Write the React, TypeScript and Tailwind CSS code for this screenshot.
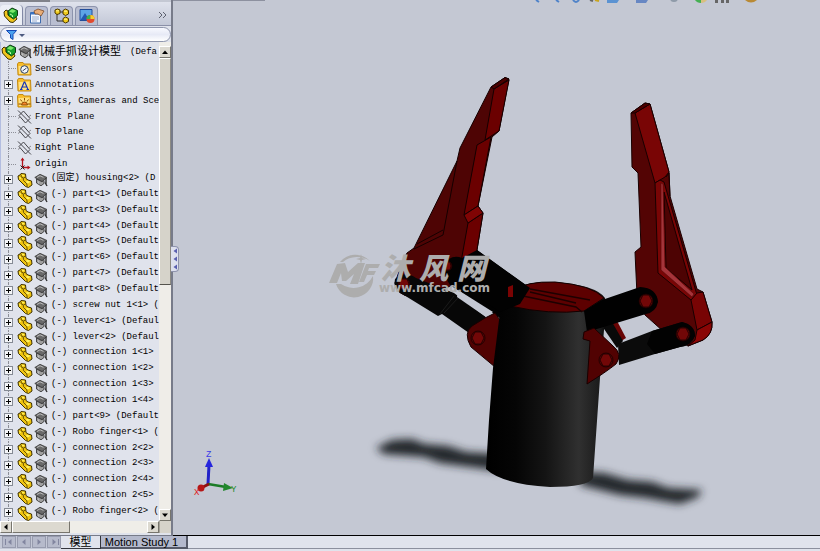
import type { ReactNode } from "react";

const SONG = "font-['Liberation_Mono','Noto_Sans_CJK_SC',monospace]";

type Kind = "folder" | "plane" | "origin" | "part";
type Row = { label: string; kind: Kind; glyph?: "sensor" | "note" | "light"; expandable?: boolean };

const rows: Row[] = [
  { label: "Sensors", kind: "folder", glyph: "sensor" },
  { label: "Annotations", kind: "folder", glyph: "note", expandable: true },
  { label: "Lights, Cameras and Sce", kind: "folder", glyph: "light", expandable: true },
  { label: "Front Plane", kind: "plane" },
  { label: "Top Plane", kind: "plane" },
  { label: "Right Plane", kind: "plane" },
  { label: "Origin", kind: "origin" },
  ...[
    "(固定) housing<2> (D",
    "(-) part<1> (Default",
    "(-) part<3> (Default",
    "(-) part<4> (Default",
    "(-) part<5> (Default",
    "(-) part<6> (Default",
    "(-) part<7> (Default",
    "(-) part<8> (Default",
    "(-) screw nut 1<1> (",
    "(-) lever<1> (Defaul",
    "(-) lever<2> (Defaul",
    "(-) connection 1<1>",
    "(-) connection 1<2>",
    "(-) connection 1<3>",
    "(-) connection 1<4>",
    "(-) part<9> (Default",
    "(-) Robo finger<1> (",
    "(-) connection 2<2>",
    "(-) connection 2<3>",
    "(-) connection 2<4>",
    "(-) connection 2<5>",
    "(-) Robo finger<2> (",
  ].map((label): Row => ({ label, kind: "part", expandable: true })),
];

function PartIcon() {
  return (
    <svg viewBox="0 0 16 16" className="h-4 w-4 shrink-0" aria-hidden="true">
      <path d="M1 4 L3 3 L4 1.500 L8.500 2 L9 6.500 L11 8 L14.500 9 L15 13 L11.500 15.500 L8.500 14.500 L1.500 7.500 Z" fill="#f0c410" stroke="#3c3000" strokeWidth="1" strokeLinejoin="round" />
      <path d="M4.500 3.500 L5.500 2.500 L7.500 3 L6.500 4.500 Z M8.500 10 L10.500 8.800 L13.500 9.800 L11 11.500 Z M2.200 5 L4 5.500 L4 7 L2.200 6.500 Z" fill="#fff25e" />
      <path d="M4.200 3 L4.200 5 L6.200 5.800 L6.500 8.500 L9.800 11.800 L10.200 14.500 M8.500 5 L6.500 6" fill="none" stroke="#5b4800" strokeWidth="0.9" />
    </svg>
  );
}

function AssemblyIcon() {
  return (
    <svg viewBox="0 0 16 16" className="h-4 w-4 shrink-0" aria-hidden="true">
      <path d="M1 5 L3 3 L5 4 L5 8 L9 10 L13 10 L14 12 L10 15.500 L7 15 L1.500 9 Z" fill="#efc51c" stroke="#3c3000" />
      <path d="M5 4 L9 1 L14.500 3.500 L14.500 8.500 L10.500 12 L5.500 8.500 Z" fill="#18a02c" stroke="#0b3d10" />
      <path d="M6 4.500 L9 2 L13 3.700 L10 6 Z" fill="#7be86a" />
      <path d="M7 7 L9.500 8.500 L9.500 10" fill="none" stroke="#c8ffb8" />
    </svg>
  );
}

function CapIcon() {
  return (
    <svg viewBox="0 0 14 14" className="h-3.5 w-3.5 shrink-0" aria-hidden="true">
      <path d="M0.800 4.500 L6 1.300 L13 4.500 L8 8.500 Z" fill="#6a6a6a" stroke="#3a3a3a" strokeWidth="0.8" />
      <path d="M2.500 6 L2.500 10 L7 12.800 L10 10.500 L10 7.300 L8 8.800 Z" fill="#a0a0a0" stroke="#3a3a3a" strokeWidth="0.9" />
      <path d="M3 4.500 L6 2.800 L9.500 4.400 M4.500 8.500 L4.500 10.500" stroke="#c4c4c4" fill="none" strokeWidth="0.9" />
      <path d="M12 5 L12 11 M11 9.500 L13 13" stroke="#303030" strokeWidth="1.400" fill="none" />
    </svg>
  );
}

function FolderIcon({ glyph }: { glyph?: Row["glyph"] }) {
  return (
    <svg viewBox="0 0 15 14" className="h-3.5 w-[15px] shrink-0" aria-hidden="true">
      <path d="M0.500 2 L1.500 0.500 L6 0.500 L7 2 L13.500 2 L14 13 L1 13 Z" fill="#f7bb28" stroke="#c48a12" />
      <path d="M1.500 4 L12.500 3.500 L12.500 12 L2 12 Z" fill="#ffe080" />
      {glyph === "sensor" && (
        <g fill="#f1f5fa" stroke="#33435f">
          <circle cx="7.500" cy="7.500" r="3.800" />
          <path d="M5.500 9 L9.500 6" />
        </g>
      )}
      {glyph === "note" && <path d="M4 11.500 L7.200 4 L7.800 4 L11 11.500 M5.500 9 L9.500 9 M3 11.500 L5.500 11.500 M9.500 11.500 L12 11.500" stroke="#1433b8" strokeWidth="1.200" fill="none" />}
      {glyph === "light" && (
        <g stroke="#8b4a00" fill="none">
          <path d="M4.500 11 A3 3 0 0 1 10.500 11 Z" fill="#f8862a" />
          <path d="M7.500 4 L7.500 6.500 M3.500 5.500 L5 7.500 M11.500 5.500 L10 7.500 M1.500 10 L4 10 M11 10 L13.500 10" />
        </g>
      )}
    </svg>
  );
}

function PlaneIcon() {
  return (
    <svg viewBox="0 0 15 14" className="h-3.5 w-[15px] shrink-0" aria-hidden="true">
      <path d="M2 5.500 L6.500 1 L13 8.500 L8.500 13 Z M1 0.500 L14 13.500" fill="none" stroke="#45454a" />
      <path d="M1 8.500 L3 7 M12 6.500 L14 5" stroke="#8a8a90" />
    </svg>
  );
}

function OriginIcon() {
  return (
    <svg viewBox="0 0 15 14" className="h-3.5 w-[15px] shrink-0" aria-hidden="true">
      <path d="M5.500 10.500 L5.500 2 M5.500 10.500 L12 10.500" stroke="#b3141c" strokeWidth="1.300" />
      <path d="M3.500 3.500 L5.500 0.500 L7.500 3.500 Z M10.500 8.500 L13.500 10.500 L10.500 12.500 Z" fill="#b3141c" />
      <path d="M3.500 8.500 L7.500 12.500 M7.500 8.500 L3.500 12.500" stroke="#222" />
    </svg>
  );
}

function TreeRow({ row }: { row: Row }) {
  const isPart = row.kind === "part";
  return (
    <li className="relative flex min-h-0 flex-1 items-center">
      <span className="absolute inset-y-0 left-[7px] border-l border-dotted border-[#8d8f98]" />
      <span className="flex w-4 shrink-0 items-center pl-[3px]">
        {row.expandable ? (
          <button type="button" aria-label={"Expand " + row.label} className="relative flex h-[9px] w-[9px] items-center justify-center border border-[#858a94] bg-[#f4f5f8]">
            <span className="absolute h-px w-[5px] bg-black" />
            <span className="absolute h-[5px] w-px bg-black" />
          </button>
        ) : (
          <span className="ml-1 w-2 border-t border-dotted border-[#8d8f98]" />
        )}
      </span>
      {row.kind === "folder" && <FolderIcon glyph={row.glyph} />}
      {row.kind === "plane" && <PlaneIcon />}
      {row.kind === "origin" && <OriginIcon />}
      {isPart && <PartIcon />}
      {isPart && <span className="pl-px"><CapIcon /></span>}
      <span className={isPart ? "pb-1 pl-[3px]" : "pl-[3px]"}>{row.label}</span>
    </li>
  );
}

function Tri({ dir, muted }: { dir: "up" | "down" | "left" | "right"; muted?: boolean }) {
  const d = {
    up: "M1 6 L4 2.500 L7 6 Z",
    down: "M1 2.500 L7 2.500 L4 6 Z",
    left: "M5.500 1 L5.500 7 L2 4 Z",
    right: "M2.500 1 L2.500 7 L6 4 Z",
  }[dir];
  return (
    <svg viewBox="0 0 8 8" className="h-2 w-2 shrink-0" aria-hidden="true">
      <path d={d} fill={muted ? "#8286a0" : "#000"} />
    </svg>
  );
}

function ScrollButton({ label, children }: { label: string; children: ReactNode }) {
  return (
    <button type="button" aria-label={label} className="flex h-3 w-3 shrink-0 items-center justify-center border border-t-white border-r-[#77756d] border-b-[#77756d] border-l-white bg-[#dcd9d0]">
      {children}
    </button>
  );
}

function TabIcon({ index }: { index: number }) {
  if (index === 0) return <AssemblyIcon />;
  return (
    <svg viewBox="0 0 16 16" className="h-4 w-4" aria-hidden="true">
      {index === 1 && (
        <g>
          <path d="M1.500 4.500 H11.500 V15 H1.500 Z" fill="#f4f8ff" stroke="#3d6caf" />
          <path d="M2 5.500 H11" stroke="#3873c4" strokeWidth="2" />
          <path d="M3 9 H10 M3 11 H10 M3 13 H8" stroke="#9aaccc" />
          <path d="M5 3 L9 1 L15 3 L12 8 L9 6 L6 6 Z" fill="#e8ad78" stroke="#7d4c29" strokeWidth="0.8" />
        </g>
      )}
      {index === 2 && (
        <g>
          <path d="M3 4 V13 H10 M3 4 H9" fill="none" stroke="#333" />
          <path d="M1 2 L3.500 1 L6 2 L6 5.500 L3 6.500 L1 5 Z M9 2.500 L11.500 1 L14.500 2.500 L14.500 6 L11.500 7.500 L9 6 Z M9 10.500 L11.500 9 L14.500 10.500 L14.500 13.500 L11.500 15 L9 13.500 Z" fill="#f0ca1c" stroke="#4c3900" />
          <path d="M2 2.800 L5 2.800 M10 3.200 L13 3.200 M10 11.200 L13 11.200" stroke="#fff594" />
        </g>
      )}
      {index === 3 && (
        <g>
          <path d="M1 1.500 H13 V12.500 H1 Z" fill="#5da5e6" stroke="#234d9a" />
          <path d="M1.500 12 L6 5 L9 10 L12 7 L12.500 12 Z" fill="#2459b1" />
          <circle cx="11.500" cy="11" r="4" fill="#e24b2e" />
          <path d="M11.500 11 L7.500 11 A4 4 0 0 1 11.500 7 Z" fill="#3bb54a" />
          <path d="M11.500 11 L11.500 7 A4 4 0 0 1 15.500 11 Z" fill="#f5cf2c" />
        </g>
      )}
    </svg>
  );
}

function FeaturePanel() {
  return (
    <aside className="flex w-[173px] shrink-0 flex-col border-r-2 border-b border-r-[#777b89] border-b-[#777b89] bg-[#e0e3ec]">
      <div className="h-0.5 shrink-0 bg-[#c4c8d3]">
        <div className="h-0.5 w-[50px] bg-[#80828a]" />
      </div>
      <nav className="flex h-6 shrink-0 items-end border-b border-[#8b90a8] bg-linear-to-b from-[#dfe2ec] to-[#c3c8d7]">
        {["Feature tree", "Properties", "Configurations", "Display"].map((name, i) => (
          <button
            key={name}
            type="button"
            aria-label={name}
            className={
              i === 0
                ? "flex h-5 w-[23px] items-center justify-center rounded-t-sm border-r border-[#8289a5] bg-[#eceff6]"
                : "ml-0.5 flex h-[19px] w-[23px] items-center justify-center rounded-t-sm border border-b-0 border-[#8d94ad] bg-[#b9bed1]"
            }
          >
            <TabIcon index={i} />
          </button>
        ))}
        <button type="button" aria-label="More" className="mr-1 mb-1.5 ml-auto">
          <svg viewBox="0 0 9 8" className="h-2 w-[9px]" aria-hidden="true">
            <path d="M1 1 L4 4 L1 7 M5 1 L8 4 L5 7" fill="none" stroke="#5e6270" />
          </svg>
        </button>
      </nav>
      <label className="mt-px flex h-[15px] shrink-0 items-center gap-0.5 rounded-full border border-[#8f96ad] bg-linear-to-b from-[#f8f9ff] via-[#e7eaf6] to-white pl-1">
        <svg viewBox="0 0 20 12" className="h-3 w-5 shrink-0" aria-hidden="true">
          <path d="M1.500 1.500 H11.500 L8 5.500 V10.500 L5.500 9 V5.500 Z" fill="#4aa0ee" stroke="#1548b4" />
          <path d="M14 5 H20 L17 8 Z" fill="#4c5a80" />
        </svg>
        <input aria-label="Filter" className="w-full min-w-0 bg-transparent text-[9px] outline-none" />
      </label>

      <div className="flex min-h-0 flex-1 border-l border-[#b3bde0]">
        <div className={"flex min-w-0 flex-1 flex-col overflow-hidden text-[9px] leading-[14px] whitespace-pre text-black " + SONG}>
          <div className="flex h-[19px] shrink-0 items-center gap-px">
            <AssemblyIcon />
            <CapIcon />
            <span className="text-[11px]">机械手抓设计模型</span>
            <span className="pl-2">(Defa</span>
          </div>
          <ul className="flex min-h-0 flex-1 flex-col">
            {rows.map((row) => (
              <TreeRow key={row.label} row={row} />
            ))}
          </ul>
        </div>
        <div className="flex w-3 shrink-0 flex-col bg-[#efede8] pt-1">
          <ScrollButton label="Scroll up"><Tri dir="up" /></ScrollButton>
          <div className="flex-1 border border-t-white border-r-[#8d8b83] border-b-[#55534d] border-l-white bg-[#d6d3ca]" />
          <div className="flex-1" />
          <ScrollButton label="Scroll down"><Tri dir="down" /></ScrollButton>
        </div>
      </div>
      <div className="flex h-3 shrink-0 bg-[#efede8]">
        <ScrollButton label="Scroll left"><Tri dir="left" /></ScrollButton>
        <div className="w-[58px] border border-t-white border-r-[#77756d] border-b-[#77756d] border-l-white bg-[#dcd9d0]" />
        <div className="flex-1" />
        <ScrollButton label="Scroll right"><Tri dir="right" /></ScrollButton>
        <div className="w-3 border-l border-[#a5a299] bg-[#d6d3ca]" />
      </div>
      <div className="h-0.5 shrink-0" />
    </aside>
  );
}

function Bolt({ x, y, r = 6 }: { x: number; y: number; r?: number }) {
  return (
    <g stroke="#170000" strokeWidth="0.8">
      <circle cx={x} cy={y} r={r} fill="#5c0505" />
      <path d={`M${x - 3} ${y - r + 1} L${x + 3} ${y - r + 1} L${x + r - 1} ${y} L${x + 3} ${y + r - 1} L${x - 3} ${y + r - 1} L${x - r + 1} ${y} Z`} fill="#720707" />
    </g>
  );
}

function Model() {
  return (
    <svg viewBox="173 0 647 535" className="h-full w-full" role="img" aria-label="Robot gripper assembly">
      <defs>
        <linearGradient id="barrel" x1="0" x2="1">
          <stop offset="0" stopColor="#000" />
          <stop offset="0.25" stopColor="#050505" />
          <stop offset="0.5" stopColor="#141414" />
          <stop offset="0.78" stopColor="#303030" />
          <stop offset="0.95" stopColor="#1c1c1c" />
          <stop offset="1" stopColor="#0c0c0c" />
        </linearGradient>
        <filter id="soft" x="-20%" y="-60%" width="140%" height="220%">
          <feGaussianBlur stdDeviation="4" />
        </filter>
      </defs>

      {/* floor shadows */}
      <g fill="#242629" filter="url(#soft)">
        <path d="M376 448 L392 440 L412 439 L424 444 L448 446 L466 452 L500 454 L500 471 L478 468 L440 463 L424 457 L384 454 Z" />
        <path d="M580 472 L604 473 L628 480 L652 482 L668 488 L702 490 L698 497 L680 504 L662 501 L646 498 L620 495 L580 485 Z" />
      </g>

      {/* left finger */}
      <g stroke="#150000" strokeWidth="1" strokeLinejoin="round">
        <path d="M505 77.500 L509 79 L499 131 L492 137 L478 206 L483 213 L475 262 L455 285 L412 297 Q396 295 395 283 L402 263 L407 253 L414 248 L457 161 L460 148 L491 87 Z" fill="#4e0404" />
        <path d="M494 89 L509 80 L499 131 L485 140 Z M477 145 L491 137 L478 206 L464 215 Z M468 223 L483 213 L475 262 L461 262 Z" fill="#6b0000" />
        <path d="M464 215 L478 206 L483 213 L468 223 Z" fill="#800404" />
        <path d="M491 87 L505 77.500 L509 79 L494 89 Z" fill="#4a0000" />
        <path d="M457 161 L443 235 L414 249 M443 230 L417 244" fill="none" />
      </g>

      {/* left links */}
      <path d="M449 259 Q455 255 462 258 L477 250 L530 288 L530 320 L500 318 L450 285 Q440 270 449 259 Z" fill="#020202" />
      <path d="M395 279 Q404 270 416 278 L454 293 L486 317 L478 333 L469 333 L442 314 L438 316 L399 292 Q393 287 395 279 Z" fill="#070707" />
      <path d="M454 296 L440 314 M458 298 L444 313" stroke="#1b1b1b" fill="none" />
      <path d="M458 290 L493 312 L486 317 L457 297 Z" fill="#c4c8d3" />
      <Bolt x={404} y={284} />
      <Bolt x={447} y={266} r={5} />

      {/* left bracket */}
      <path d="M485 318 L495 313 L500 320 L495 367 L471 347 Q463 333 472 326 Z" fill="#500202" stroke="#180000" />
      <Bolt x={478} y={338} r={7} />

      {/* right finger */}
      <g stroke="#180000" strokeWidth="1" strokeLinejoin="round">
        <path d="M631 113 L645 103 L650 104 L669 172 L670 196 L697 289 L703 292 L712 322 Q713 334 703 340 L688 346 L664 332 L645 315 L637 295 L635 252 L641 247 L638 173 L632 167 Z" fill="#530404" />
        <path d="M635 113 L650 104 L669 172 L665 177 L655 183 Z" fill="#790505" />
        <path d="M631 113 L645 103 L650 104 L635 113 Z" fill="#4c0000" />
        <path d="M655 183 L660 180 L664 182 L697 295 L691 300 L658 273 Z" fill="#790505" />
        <path d="M664 192 L692 290 L666 268 Z" fill="#4d0303" />
        <path d="M661 183 L663 184 L665 267 L694 294 L692 297 L661 270 Z" fill="#a5343a" stroke="#5a0808" strokeWidth="0.7" />
        <path d="M666 177 L669 173 L670 196" fill="none" />
        <path d="M691 300 L697 293 L703 292 L712 322 L697 330 Z" fill="#780404" />
        <path d="M697 330 L712 322 Q713 334 703 340 L688 346 L695 340 Z" fill="#8a0505" />
      </g>

      {/* housing */}
      <path d="M610 321 L616 319 L626 338 L618 343 Z" fill="#680404" />
      <path d="M602 326 L612 322 L623 341 L617 348 Z" fill="#090909" />
      <path d="M508 307 L512 291 Q524 281 555 282 Q596 285 605 298 L604 330 L600 378 L593 478 Q588 487 550 487 Q502 484 486 469 L489 420 L493 368 L500 312 Z" fill="url(#barrel)" />
      <path d="M510 306 L513 291 Q526 281 555 282 Q592 285 604 298 L584 311 Q550 315 510 306 Z" fill="#5d0000" stroke="#120000" />
      <path d="M530 289 L590 300 M523 296 L576 307 L582 312 M530 292 L576 303" fill="none" stroke="#1d0000" strokeWidth="1.400" />
      <path d="M477 250 L530 288 L520 304 L500 312 L482 300 Z" fill="#020202" />
      <path d="M508 287 L513 285 L513 297 L508 297 Z" fill="#7a0303" />

      {/* right links */}
      <path d="M584 311 L602 300 L640 287 Q657 288 658 302 Q656 312 646 314 L587 332 Z" fill="#010101" />
      <path d="M618 344 L652 331 L682 322 Q695 325 695 336 Q691 346 680 347 L655 354 L619 365 Z" fill="#0b0b0b" />
      <path d="M652 331 L682 322 Q695 325 695 336 Q691 346 680 347 L655 354 L647 344 Z" fill="#020202" />
      <Bolt x={646} y={301} r={7} />
      <Bolt x={683} y={334} r={7} />
      <path d="M584 332 L594 328 L613 346 Q623 354 616 364 Q606 372 587 384 L590 341 L583 339 Z" fill="#510202" stroke="#180000" />
      <Bolt x={606} y={360} r={7} />

      {/* studio watermark */}
      <g fill="#adadad">
        <path d="M329 283 L337 264 L345 263 L348 272 L358 263 L365 263 L358 284 L350 284 L354 274 L346 281 L342 281 L341 273 L337 283 Z" />
        <path d="M366 264 L380 264 L378 268 L369 268 L368 271 L376 271 L374 275 L367 275 L364 282 L359 282 Z" />
        <path d="M340 262 A20 20 0 0 1 370 261 A23 23 0 0 0 343 262 Z" />
        <path d="M336 284 A19 19 0 0 0 373 276 A22 22 0 0 1 341 284 Z" />
        <path d="M361 254 L362 258 L366 259 L362 260 L361 264 L360 260 L356 259 L360 258 Z" />
        <text x="381 419 457" y="279" fontSize="29" fontWeight="900" fontStyle="italic" fontFamily="'Noto Sans CJK SC', sans-serif">沐风网</text>
        <text x="379" y="292" fontSize="12" fontWeight="700" fontFamily="'DejaVu Sans', sans-serif">www.mfcad.com</text>
      </g>

      {/* axis triad */}
      <path d="M208 484 L209 465" stroke="#2222c8" strokeWidth="3" />
      <path d="M205 467 L209 458 L213 467 Z" fill="#2525dd" />
      <path d="M208 484 L226 487" stroke="#1b7b26" strokeWidth="2.500" />
      <path d="M224 483 L233 488 L223 491 Z" fill="#23882e" />
      <path d="M209 484 L203 487" stroke="#8d1010" strokeWidth="3" />
      <circle cx="201" cy="488" r="3.500" fill="#b51616" />
      <g fontSize="9" fontFamily="'Liberation Mono', monospace">
        <text x="206" y="457" fill="#3a3ae8">Z</text>
        <text x="231" y="492" fill="#1f8a2c">Y</text>
        <text x="194" y="495" fill="#e02020">X</text>
      </g>

      {/* heads-up view icons, cut by the window's top edge */}
      <g strokeWidth="2" fill="none">
        <path d="M536 0 L539 2 M556 0 L559 2 M573 0 Q576 4 579 0" stroke="#4f83c9" />
        <path d="M590 0 L593 1" stroke="#666" />
        <path d="M595 0 L599 1" stroke="#c9a51e" />
        <path d="M671 0 Q674 2 677 0" stroke="#8f9ba9" />
      </g>
      <path d="M607 0 H619 L617 3 H607 Z" fill="#5b93d2" />
      <path d="M636 0 H648 L646 3 H636 Z" fill="#6787c3" />
      <path d="M695 0 H701 V3 Q697 3 695 0 Z" fill="#45b052" />
      <path d="M701 0 H707 Q705 3 701 3 Z" fill="#d8c080" />
      <path d="M715 0 h3 v3 h-3 Z M721 0 h3 v3 h-3 Z M726 0 h3 v3 h-3 Z" fill="#666" />
      <path d="M745 0 H757 Q751 5 745 0 Z" fill="#b98a35" />
    </svg>
  );
}

export default function App() {
  return (
    <div className="flex h-screen flex-col overflow-hidden bg-[#c4c8d3]">
      <div className="flex min-h-0 flex-1">
        <FeaturePanel />
        <main className="relative min-w-0 flex-1 border-b border-black">
          <div className="absolute top-0 left-0 h-px w-[92px] bg-[#8d919f]" />
          <Model />
          <button type="button" aria-label="Collapse panel" className="absolute top-[246px] -left-0.5 flex h-[26px] w-2 flex-col items-center justify-around rounded-r-sm border border-l-0 border-[#8f94ad] bg-[#dde0ee]">
            {[0, 1, 2].map((n) => (
              <svg key={n} viewBox="0 0 4 6" className="h-1.5 w-1" aria-hidden="true"><path d="M4 0.500 V5.500 L0.500 3 Z" fill="#5a5fb0" /></svg>
            ))}
          </button>
        </main>
      </div>
      <footer className="flex h-[15px] shrink-0 bg-[#e0e3ec] font-['Liberation_Sans','Noto_Sans_CJK_SC',sans-serif] text-[11px] leading-3 text-black">
        <div className="flex h-[13px] w-[61px] gap-px bg-[#c4c8d6] pl-0.5">
          {["First", "Previous", "Next", "Last"].map((name, i) => (
            <button key={name} type="button" aria-label={name} className="flex h-3 w-3.5 items-center justify-center border border-[#979bae] bg-[#b6bacb]">
              {i === 0 && <span className="h-1.5 w-px bg-[#8286a0]" />}
              <Tri dir={i < 2 ? "left" : "right"} muted />
              {i === 3 && <span className="h-1.5 w-px bg-[#8286a0]" />}
            </button>
          ))}
        </div>
        <button type="button" className="h-[13px] w-10 border-r border-b border-[#33353d] bg-[#e0e3ec]">模型</button>
        <button type="button" className="h-[13px] w-[87px] border-r-2 border-b-2 border-[#555967] bg-[#b4b9cc] pr-1">Motion Study 1</button>
        <div className="h-[13px] flex-1 border-b border-[#8c909e]" />
      </footer>
    </div>
  );
}
